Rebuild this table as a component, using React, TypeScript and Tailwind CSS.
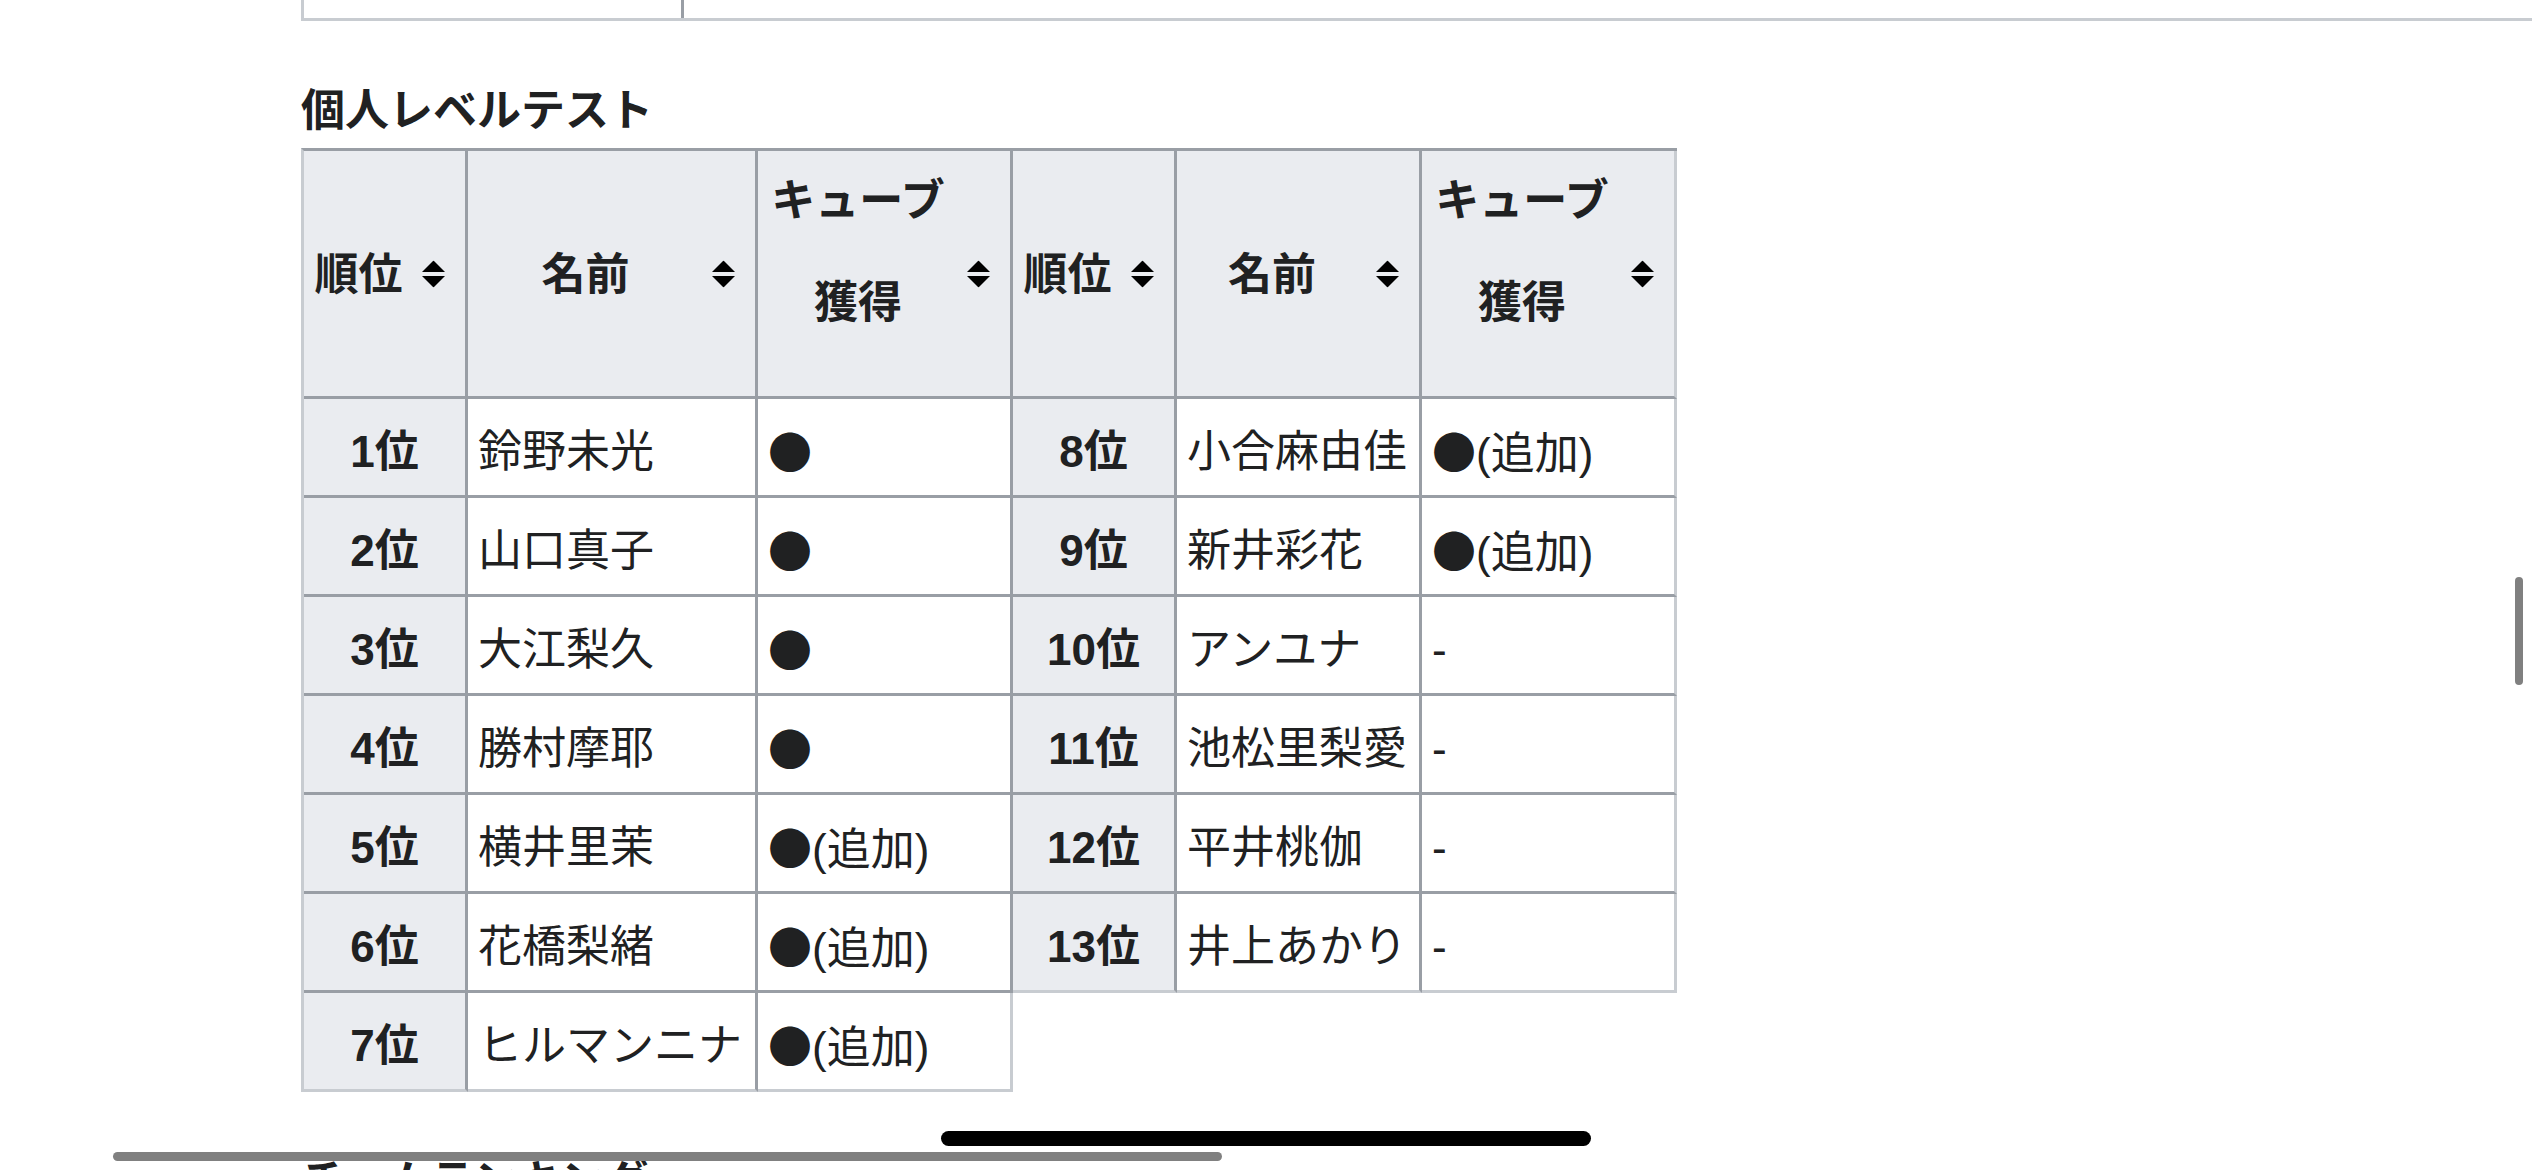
const leftRows: [string, string, string][] = [
  ['1位', '鈴野未光', 'o'],
  ['2位', '山口真子', 'o'],
  ['3位', '大江梨久', 'o'],
  ['4位', '勝村摩耶', 'o'],
  ['5位', '横井里茉', 'add'],
  ['6位', '花橋梨緒', 'add'],
  ['7位', 'ヒルマンニナ', 'add'],
];

const rightRows: [string, string, string][] = [
  ['8位', '小合麻由佳', 'add'],
  ['9位', '新井彩花', 'add'],
  ['10位', 'アンユナ', '-'],
  ['11位', '池松里梨愛', '-'],
  ['12位', '平井桃伽', '-'],
  ['13位', '井上あかり', '-'],
];

function SortIcon() {
  return (
    <svg
      width="23"
      height="27"
      viewBox="0 0 23 27"
      className="absolute right-[20px] top-1/2 -translate-y-1/2"
    >
      <path d="M11.5 0 L23 11.5 L0 11.5 Z" fill="#000" />
      <path d="M0 15.5 L23 15.5 L11.5 27 Z" fill="#000" />
    </svg>
  );
}

function Cube({ v }: { v: string }) {
  if (v === '-') return <>-</>;
  return (
    <>
      <span className="font-['Noto_Sans_CJK_JP',sans-serif]">●</span>
      {v === 'add' && '(追加)'}
    </>
  );
}

function HeaderCell({
  children,
  last,
  twoLine,
}: {
  children: React.ReactNode;
  last?: boolean;
  twoLine?: boolean;
}) {
  return (
    <div
      className={
        'relative flex items-center justify-center whitespace-nowrap bg-[#eaecf0] border-b-[3px] border-r-[3px] border-b-[#999ea5] pl-[8px] pr-[60px] text-center font-bold leading-[102px] ' +
        (last ? 'border-r-[#c8ccd1]' : 'border-r-[#999ea5]') +
        (twoLine ? ' pb-[44px]' : ' pt-[2px]')
      }
    >
      <div>{children}</div>
      <SortIcon />
    </div>
  );
}

function RankTable({
  rows,
  cols,
  first,
}: {
  rows: [string, string, string][];
  cols: string;
  first?: boolean;
}) {
  return (
    <div
      className={
        'grid border-t-[3px] border-[#999ea5] ' +
        cols +
        (first ? ' border-l-[3px] border-l-[#c8ccd1]' : '')
      }
    >
      <div className="contents">
        <HeaderCell>順位</HeaderCell>
        <HeaderCell>名前</HeaderCell>
        <HeaderCell last={!first} twoLine>
          キューブ
          <br />
          獲得
        </HeaderCell>
      </div>
      {rows.map(([rank, name, cube], i) => {
        const lastRow = i === rows.length - 1;
        const b = lastRow ? 'border-b-[#c8ccd1]' : 'border-b-[#999ea5]';
        return (
          <div key={rank} className="contents">
            <div
              className={
                'flex h-[99px] items-center justify-center bg-[#eaecf0] pt-[10px] border-b-[3px] border-r-[3px] border-r-[#999ea5] font-bold ' +
                b
              }
            >
              {rank}
            </div>
            <div
              className={
                'flex h-[99px] items-center whitespace-nowrap bg-white px-[10px] pt-[10px] border-b-[3px] border-r-[3px] border-r-[#999ea5] ' +
                b
              }
            >
              {name}
            </div>
            <div
              className={
                'flex h-[99px] items-center whitespace-nowrap bg-white px-[10px] pt-[10px] border-b-[3px] border-r-[3px] ' +
                b +
                (lastRow || !first ? ' border-r-[#c8ccd1]' : ' border-r-[#999ea5]')
              }
            >
              <span>
                <Cube v={cube} />
              </span>
            </div>
          </div>
        );
      })}
    </div>
  );
}

export default function App() {
  return (
    <div className="relative h-[1170px] w-[2532px] overflow-hidden bg-white font-['Liberation_Sans','Noto_Sans_CJK_JP',sans-serif] text-[44px] text-[#202122]">
      <div className="pl-[301px]">
        {/* tail of the previous table */}
        <div className="flex h-[21px] w-[2231px] border-b-[3px] border-l-[3px] border-[#c8ccd1]">
          <div className="w-[380px] border-r-[3px] border-[#999ea5]" />
        </div>

        <h3 className="mt-[60px] font-bold leading-[60px]">個人レベルテスト</h3>

        <div className="mt-[7px] flex items-start">
          <RankTable rows={leftRows} cols="grid-cols-[164px_290px_255px] grid-rows-[248px_repeat(7,99px)]" first />
          <RankTable rows={rightRows} cols="grid-cols-[164px_245px_255px] grid-rows-[248px_repeat(6,99px)]" />
        </div>

        <h3 className="mt-[60px] font-bold leading-[60px]">チームランキング</h3>
      </div>

      {/* browser overlays */}
      <div className="absolute left-[941px] top-[1131px] h-[15px] w-[650px] rounded-full bg-black" />
      <div className="absolute left-[113px] top-[1152px] h-[9px] w-[1109px] rounded-full bg-[#808080]" />
      <div className="absolute left-[2515px] top-[577px] h-[108px] w-[8px] rounded-full bg-[#808080]" />
    </div>
  );
}
